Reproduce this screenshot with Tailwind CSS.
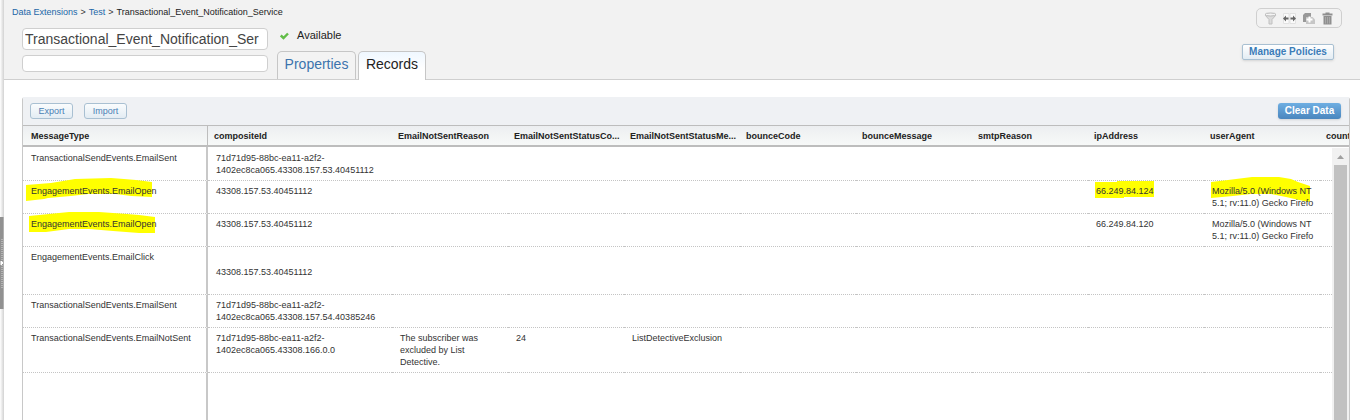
<!DOCTYPE html>
<html lang="en">
<head>
<meta charset="utf-8">
<title>Data Extension Records</title>
<script src="https://cdn.jsdelivr.net/npm/@tailwindcss/browser@4"></script>
</head>
<body class="flex h-screen overflow-hidden bg-white font-['Liberation_Sans',Arial,sans-serif] text-[#333]">
<aside class="relative w-1 shrink-0 bg-linear-to-r from-white to-[#d2d2d2]">
  <button aria-label="Expand sidebar" class="absolute top-[217px] left-0 flex h-[92px] w-1 items-center border-r border-[#b0b0b0] bg-[#919191]">
    <svg class="h-[50px] w-[3px]" viewBox="0 0 3 50"><path d="M2 1V50" stroke="#b4b4b4" stroke-width="2" stroke-dasharray="1 1"/><path d="M1 23l2 2-2 2z" fill="#fff" stroke="#fff"/></svg>
  </button>
</aside>
<main class="flex min-w-0 flex-1 flex-col">
  <header class="flex h-20 shrink-0 justify-between border-b border-[#cfcfcf] bg-[#f2f2f2] pr-[18px]">
    <div class="flex flex-col">
      <nav aria-label="Breadcrumb" class="flex h-7 gap-[3px] pt-[6px] pl-2 text-[9px] leading-3">
        <a href="#" class="text-[#1c67a8]">Data Extensions</a><span>&gt;</span>
        <a href="#" class="text-[#1c67a8]">Test</a><span>&gt;</span>
        <span class="text-[#222]">Transactional_Event_Notification_Service</span>
      </nav>
      <div class="flex pl-[18px]">
        <div class="flex w-[246px] flex-col gap-[5px]">
          <input aria-label="Name" value="Transactional_Event_Notification_Ser" class="h-[22px] rounded-[4px] border border-[#cfcfcf] bg-white px-[2px] text-[14px] text-[#444]">
          <input aria-label="Description" class="h-[17px] rounded-[4px] border border-[#cfcfcf] bg-white px-[2px] text-[10px]">
        </div>
        <div class="flex flex-col pl-[9px]">
          <div class="flex h-[23px] items-start gap-2 pl-[3px] text-[11px] leading-[14px]">
            <svg class="mt-1 h-2 w-[9px]" viewBox="0 0 9 8"><path d="M.8 3.500l2.700 2.500L8 1.500" fill="none" stroke="#62bd48" stroke-width="2.400"/></svg>
            <span class="text-[#222]">Available</span>
          </div>
          <div role="tablist" class="flex gap-[2px]">
            <button role="tab" class="h-7 w-[79px] rounded-t-[5px] border border-b-0 border-[#c6c6c6] bg-[#f3f3f3] pb-[2px] text-[14px] text-[#3c73ad]">Properties</button>
            <button role="tab" aria-selected="true" class="-mb-px h-[29px] w-[68px] rounded-t-[5px] border border-b-0 border-[#c6c6c6] bg-linear-to-b from-[#eff7ff] to-white to-60% pb-[3px] text-[14px] text-[#222]">Records</button>
          </div>
        </div>
      </div>
    </div>
    <div class="flex flex-col items-end pt-2">
      <div class="flex h-5 w-[86px] items-center justify-center gap-[6px] rounded-[5px] border border-[#cfcfcf]">
        <button aria-label="Filter"><svg class="size-[13px]" viewBox="0 0 13 13"><path d="M1 3L5 7.500V12h3V7.500L12 3z" fill="#dcdcdc" stroke="#c0c0c0"/><ellipse cx="6.500" cy="2.500" rx="5.500" ry="1.500" fill="#f4f4f4" stroke="#b8b8b8"/></svg></button>
        <button aria-label="Resize columns"><svg class="size-[13px]" viewBox="0 0 13 13"><path d="M.5 1.500h5.500v10H.5zM7 1.500h5.500v10H7z" fill="#fafafa" stroke="#e2e2e2"/><path d="M0 6.500L3 3.500v2h2.500v2H3v2zM13 6.500L10 3.500v2H7.500v2H10v2z" fill="#666"/></svg></button>
        <button aria-label="Copy"><svg class="size-[13px]" viewBox="0 0 13 13"><path d="M1 3L3 1h6v9H1z" fill="#999"/><path d="M4 5h6.500L13 7.500V12H4z" fill="#c6c6c6"/><path d="M7.500 4.500v6M4.500 7.500h6" stroke="#fff" stroke-width="2"/></svg></button>
        <button aria-label="Delete"><svg class="size-[13px]" viewBox="0 0 13 13"><path d="M1.500 1.500h10v2h-10zM4.500 .5h4v1h-4zM2.500 4h8v8.500h-8z" fill="#8f8f8f"/><path d="M4.500 5v6.500M6.500 5v6.500M8.500 5v6.500" stroke="#a8a8a8"/></svg></button>
      </div>
      <button class="mt-4 h-4 w-[92px] rounded-[2px] border border-[#a9c0d2] bg-linear-to-b from-white to-[#e3ecf3] text-[10px] leading-3 font-bold whitespace-nowrap text-[#3b7cb8] shadow-sm mr-2">Manage Policies</button>
    </div>
  </header>
  <section class="mt-[17px] mr-[10px] ml-[18px] flex min-h-0 flex-1 flex-col rounded-t-[3px] border-x border-[#c8c8c8]">
    <div class="flex h-7 shrink-0 items-center justify-between bg-[#eff1f4] pr-2 pl-[7px]">
      <div class="flex gap-[11px]">
        <button class="h-4 w-[43px] rounded-[3px] border border-[#a9c0d2] bg-linear-to-b from-[#fafcfd] to-[#e3ecf3] text-[9px] leading-3 text-[#4a7fb5]">Export</button>
        <button class="h-4 w-[43px] rounded-[3px] border border-[#a9c0d2] bg-linear-to-b from-[#fafcfd] to-[#e3ecf3] text-[9px] leading-3 text-[#4a7fb5]">Import</button>
      </div>
      <button class="h-4 w-[63px] rounded-[3px] bg-linear-to-b from-[#6eaee2] to-[#4a86be] text-[10px] leading-3 font-bold text-white shadow-sm">Clear Data</button>
    </div>
    <div class="relative min-h-0 flex-1 overflow-hidden">
      <table class="h-full w-[1413px] table-fixed border-separate border-spacing-0 text-left text-[9px] leading-3 whitespace-nowrap [&_td]:border-b [&_td]:border-dotted [&_td]:border-[#c4c4c4] [&_td]:py-1 [&_td]:pl-2 [&_td]:align-top [&_td:first-child]:border-r-2 [&_td:first-child]:border-r-[#c8c8c8] [&_td:first-child]:[border-right-style:solid] [&_th]:h-[22px] [&_th]:border-t [&_th]:border-b-2 [&_th]:border-[#bdbdbd] [&_th]:pl-[6px] [&_th]:text-[#222]">
        <colgroup><col class="w-[185px]"><col class="w-[184px]"><col class="w-[116px]"><col class="w-[116px]"><col class="w-[116px]"><col class="w-[116px]"><col class="w-[116px]"><col class="w-[116px]"><col class="w-[116px]"><col class="w-[116px]"><col class="w-[116px]"></colgroup>
        <thead>
          <tr class="bg-linear-to-b from-[#eceef0] to-[#f8faf9]">
            <th class="border-r border-r-[#bdbdbd] !pl-2">MessageType</th><th>compositeId</th><th>EmailNotSentReason</th><th title="EmailNotSentStatusCode">EmailNotSentStatusCo...</th><th title="EmailNotSentStatusMessage">EmailNotSentStatusMe...</th><th>bounceCode</th><th>bounceMessage</th><th>smtpReason</th><th>ipAddress</th><th>userAgent</th><th>count</th>
          </tr>
        </thead>
        <tbody>
          <tr class="h-[34px] [&_td]:!pt-[5px]"><td>TransactionalSendEvents.EmailSent</td><td>71d71d95-88bc-ea11-a2f2-<br>1402ec8ca065.43308.157.53.40451112</td><td></td><td></td><td></td><td></td><td></td><td></td><td></td><td></td><td></td></tr>
          <tr class="h-[33px]"><td><div class="relative">
            <svg class="absolute -top-2 -left-[5px] h-6 w-[127px]" viewBox="0 0 127 24"><path d="M0 8L25 6L49 2L85 1L98 2L110 3L126 5V20L105 19L90 17L62 17L45 19L22 21L18 22L0 24z" fill="#ff0"/></svg>
            <span class="relative">EngagementEvents.EmailOpen</span></div></td><td>43308.157.53.40451112</td><td></td><td></td><td></td><td></td><td></td><td></td><td><div class="relative"><svg class="absolute -top-1 -left-px h-[18px] w-[59px]" viewBox="0 0 59 18"><path d="M0 1H22V0H59V16H29V17H0z" fill="#ff0"/></svg><span class="relative">66.249.84.124</span></div></td><td><div class="relative"><svg class="absolute -top-2 -left-px h-[26px] w-[100px]" viewBox="0 0 100 26"><path d="M0 5L17 3L41 0L68 0L80 2L87 5L99 9V25L88 23L75 20L60 17L40 17L22 19L0 21z" fill="#ff0"/></svg><span class="relative">Mozilla/5.0 (Windows NT<br>5.1; rv:11.0) Gecko Firefo</span></div></td><td></td></tr>
          <tr class="h-[33px]"><td><div class="relative">
            <svg class="absolute -top-2 -left-[2px] h-6 w-[127px]" viewBox="0 0 127 24"><path d="M0 6L20 4L40 2L70 2L98 4L110 5L126 7V23L110 23L84 21L60 19L40 19L17 22L0 22z" fill="#ff0"/></svg>
            <span class="relative">EngagementEvents.EmailOpen</span></div></td><td>43308.157.53.40451112</td><td></td><td></td><td></td><td></td><td></td><td></td><td>66.249.84.120</td><td>Mozilla/5.0 (Windows NT<br>5.1; rv:11.0) Gecko Firefo</td><td></td></tr>
          <tr class="h-12"><td>EngagementEvents.EmailClick</td><td class="!pt-[19px]">43308.157.53.40451112</td><td></td><td></td><td></td><td></td><td></td><td></td><td></td><td></td><td></td></tr>
          <tr class="h-[33px]"><td>TransactionalSendEvents.EmailSent</td><td>71d71d95-88bc-ea11-a2f2-<br>1402ec8ca065.43308.157.54.40385246</td><td></td><td></td><td></td><td></td><td></td><td></td><td></td><td></td><td></td></tr>
          <tr class="h-[45px]"><td>TransactionalSendEvents.EmailNotSent</td><td>71d71d95-88bc-ea11-a2f2-<br>1402ec8ca065.43308.166.0.0</td><td>The subscriber was<br>excluded by List<br>Detective.</td><td>24</td><td>ListDetectiveExclusion</td><td></td><td></td><td></td><td></td><td></td><td></td></tr>
          <tr><td class="!border-b-0"></td><td colspan="10" class="!border-b-0"></td></tr>
        </tbody>
      </table>
      <div class="absolute top-[23px] right-0 bottom-0 flex w-[17px] flex-col items-center bg-[#f1f1f1]">
        <svg class="h-[17px] w-[7px] shrink-0" viewBox="0 0 7 17"><path d="M0 11L3.500 7L7 11z" fill="#a0a0a0"/></svg>
        <div class="w-[13px] flex-1 bg-[#c1c1c1]"></div>
      </div>
    </div>
  </section>
</main>
</body>
</html>
